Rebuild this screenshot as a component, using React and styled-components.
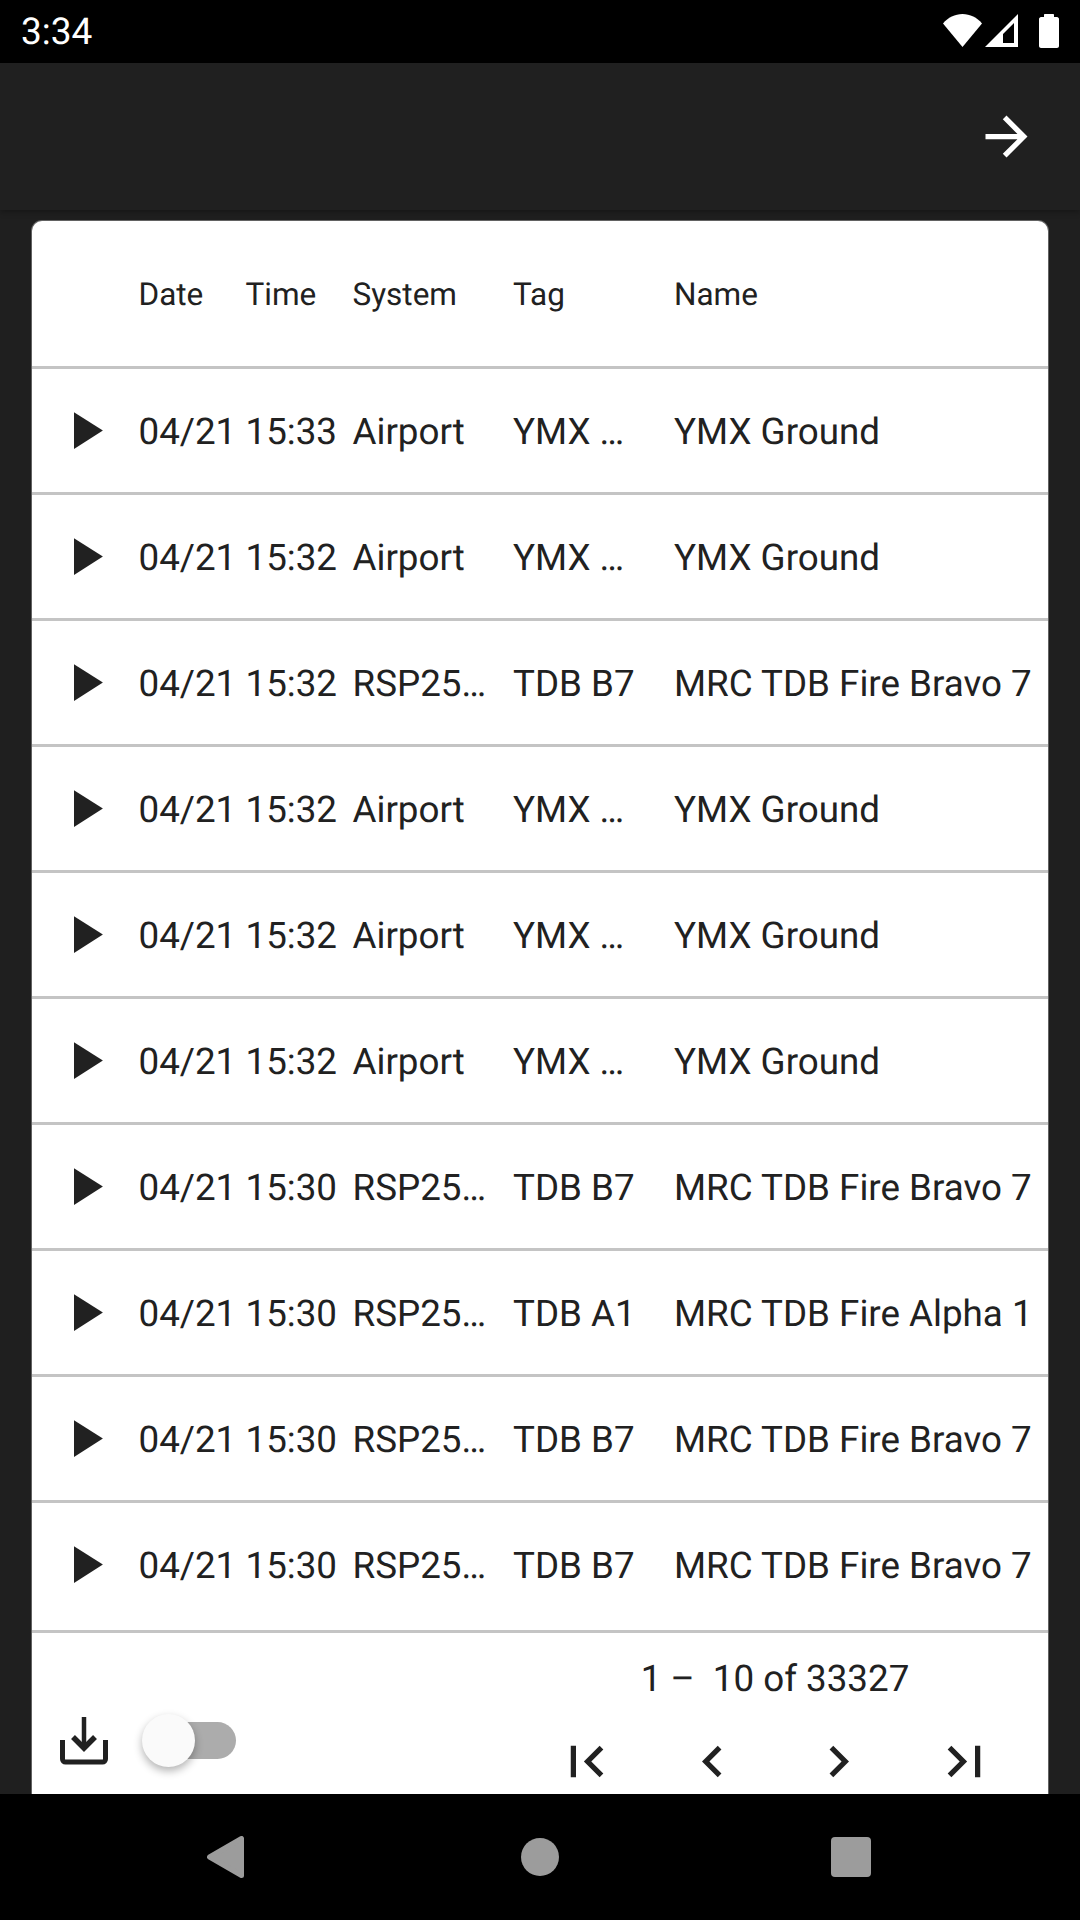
import React from 'react'
import styled, { createGlobalStyle } from 'styled-components'

const rows = [
  ['04/21', '15:33', 'Airport', 'YMX …', 'YMX Ground'],
  ['04/21', '15:32', 'Airport', 'YMX …', 'YMX Ground'],
  ['04/21', '15:32', 'RSP25…', 'TDB B7', 'MRC TDB Fire Bravo 7'],
  ['04/21', '15:32', 'Airport', 'YMX …', 'YMX Ground'],
  ['04/21', '15:32', 'Airport', 'YMX …', 'YMX Ground'],
  ['04/21', '15:32', 'Airport', 'YMX …', 'YMX Ground'],
  ['04/21', '15:30', 'RSP25…', 'TDB B7', 'MRC TDB Fire Bravo 7'],
  ['04/21', '15:30', 'RSP25…', 'TDB A1', 'MRC TDB Fire Alpha 1'],
  ['04/21', '15:30', 'RSP25…', 'TDB B7', 'MRC TDB Fire Bravo 7'],
  ['04/21', '15:30', 'RSP25…', 'TDB B7', 'MRC TDB Fire Bravo 7'],
]

const pageIcons = [
  'M18.41 16.59L13.82 12l4.59-4.59L17 6l-6 6 6 6zM6 6h2v12H6z',
  'M15.41 7.41L14 6l-6 6 6 6 1.41-1.41L10.83 12z',
  'M10 6L8.59 7.41 13.17 12l-4.58 4.59L10 18l6-6z',
  'M5.59 7.41L10.18 12l-4.59 4.59L7 18l6-6-6-6zM16 6h2v12h-2z',
]

export default function App() {
  return (
    <Screen>
      <GlobalStyle />
      <StatusBar>
        <Clock>3:34</Clock>
        <StatusIcons>
          <svg width="40" height="33" viewBox="0 0 40 33">
            <path d="M19.5 33L0 9.5C5 3.5 12 0 19.5 0S34 3.5 39 9.5z" fill="#fff" />
          </svg>
          <svg width="33" height="33" viewBox="0 0 33 33">
            <path fillRule="evenodd" d="M33 0v33H0zM29 9L18 20v9h11z" fill="#fff" />
          </svg>
          <BatteryIcon width="20" height="34" viewBox="0 0 20 34">
            <path d="M5 1c0-.6.4-1 1-1h8c.6 0 1 .4 1 1v2h3c1 0 2 1 2 2v27c0 1-1 2-2 2H2c-1 0-2-1-2-2V5c0-1 1-2 2-2h3z" fill="#fff" />
          </BatteryIcon>
        </StatusIcons>
      </StatusBar>
      <AppBar>
        <Icon size={63} color="#fff" d="M12 4l-1.41 1.41L16.17 11H4v2h12.17l-5.58 5.59L12 20l8-8z" />
      </AppBar>
      <Content>
        <Card>
          <HeaderRow>
            <span />
            <HeaderCell>Date</HeaderCell>
            <HeaderCell>Time</HeaderCell>
            <HeaderCell>System</HeaderCell>
            <HeaderCell>Tag</HeaderCell>
            <HeaderCell>Name</HeaderCell>
          </HeaderRow>
          {rows.map((row, i) => (
            <Row key={i} $last={i === rows.length - 1}>
              <PlayCell>
                <Icon size={63} color="#212121" d="M8 5v14l11-7z" />
              </PlayCell>
              {row.map((text, j) => (
                <Cell key={j}>{text}</Cell>
              ))}
            </Row>
          ))}
          <Footer>
            <FooterLeft>
              <svg width="72" height="72" viewBox="0 0 72 72" fill="none" stroke="#212121" style={{ display: 'block' }}>
                <path d="M14.5 36V55a3 3 0 0 0 3 3H54.500a3 3 0 0 0 3-3V36" strokeWidth="5" />
                <path d="M36 13V43" strokeWidth="4.5" />
                <path d="M25 33L36 44L47 33" strokeWidth="5.5" />
              </svg>
              <SwitchTrack>
                <SwitchThumb />
              </SwitchTrack>
            </FooterLeft>
            <Pager>
              <PageLabel>1 –  10 of 33327</PageLabel>
              <PageButtons>
                {pageIcons.map((d) => (
                  <PageButton key={d}>
                    <Icon size={63} color="#212121" d={d} />
                  </PageButton>
                ))}
              </PageButtons>
            </Pager>
          </Footer>
        </Card>
      </Content>
      <NavBar>
        <svg width="37" height="42" viewBox="0 0 37 42" style={{ display: 'block' }}>
          <polygon points="34.5,2.5 34.5,39.5 2.5,21" fill="#9c9c9c" stroke="#9c9c9c" strokeWidth="5" strokeLinejoin="round" />
        </svg>
        <NavCircle />
        <NavSquare />
      </NavBar>
    </Screen>
  )
}

function Icon({ size, color, d }) {
  return (
    <svg width={size} height={size} viewBox="0 0 24 24" style={{ display: 'block' }}>
      <path d={d} fill={color} />
    </svg>
  )
}

const GlobalStyle = createGlobalStyle`
  html, body {
    margin: 0;
    padding: 0;
    background: #000;
  }
  * {
    box-sizing: border-box;
  }
`

const Screen = styled.div`
  width: 1080px;
  height: 1920px;
  display: flex;
  flex-direction: column;
  overflow: hidden;
  background: #1f1f1f;
  font-family: Roboto, "Liberation Sans", sans-serif;
  text-rendering: geometricPrecision;
`

const StatusBar = styled.div`
  height: 63px;
  flex-shrink: 0;
  display: flex;
  align-items: center;
  justify-content: space-between;
  padding: 0 21px;
  background: #000;
`

const Clock = styled.div`
  color: #fff;
  font-size: 37px;
  line-height: 63px;
  padding-top: 2px;
`

const StatusIcons = styled.div`
  display: flex;
  align-items: flex-start;
  gap: 2px;
  height: 33px;
  margin-top: -3px;
`

const BatteryIcon = styled.svg`
  margin-left: 19px;
`

const AppBar = styled.div`
  height: 147px;
  flex-shrink: 0;
  display: flex;
  align-items: center;
  justify-content: flex-end;
  padding-right: 42px;
  background: #202020;
  box-shadow: 0 2px 6px rgba(0, 0, 0, 0.3);
`

const Content = styled.div`
  flex: 1;
  min-height: 0;
  padding: 11px 32px 0;
`

const Card = styled.div`
  height: 100%;
  background: #fff;
  border-radius: 10px 10px 0 0;
  overflow: hidden;
  display: flex;
  flex-direction: column;
  box-shadow: 0 0 0 1px rgba(255, 255, 255, 0.3);
`

const columns = '106.5px 107px 107px 160.5px 161px 1fr'

const HeaderRow = styled.div`
  height: 148px;
  flex-shrink: 0;
  display: grid;
  grid-template-columns: ${columns};
  align-items: center;
  border-bottom: 3px solid #c4c4c4;
`

const HeaderCell = styled.div`
  color: #212121;
  font-size: 31.5px;
  white-space: nowrap;
  padding-top: 2px;
`

const Row = styled.div`
  height: ${(p) => (p.$last ? 130 : 126)}px;
  padding-bottom: ${(p) => (p.$last ? 4 : 0)}px;
  flex-shrink: 0;
  display: grid;
  grid-template-columns: ${columns};
  align-items: center;
  border-bottom: 3px solid #c4c4c4;
`

const PlayCell = styled.div`
  padding-left: 21px;
`

const Cell = styled.div`
  color: #212121;
  font-size: 36.75px;
  white-space: nowrap;
  padding-top: 1px;
`

const Footer = styled.div`
  flex: 1;
  min-height: 0;
  display: flex;
  justify-content: space-between;
  padding-right: 21px;
`

const FooterLeft = styled.div`
  display: flex;
  align-items: center;
  align-self: flex-start;
  margin-top: 71px;
  padding-left: 16px;
  height: 72px;
`

const SwitchTrack = styled.div`
  position: relative;
  width: 86px;
  height: 37px;
  margin-left: 30px;
  border-radius: 19px;
  background: #acacac;
`

const SwitchThumb = styled.div`
  position: absolute;
  left: -8px;
  top: -8px;
  width: 53px;
  height: 53px;
  border-radius: 50%;
  background: #fafafa;
  box-shadow: 0 4px 8px rgba(0, 0, 0, 0.3);
`

const Pager = styled.div`
  display: flex;
  flex-direction: column;
  align-items: center;
  padding-top: 26px;
`

const PageLabel = styled.div`
  color: #212121;
  font-size: 36.75px;
  line-height: 39px;
  white-space: pre;
`

const PageButtons = styled.div`
  display: flex;
`

const PageButton = styled.div`
  width: 126px;
  height: 126px;
  display: flex;
  align-items: center;
  justify-content: center;
`

const NavBar = styled.div`
  height: 126px;
  flex-shrink: 0;
  display: grid;
  grid-template-columns: 314px 310px 1fr;
  align-items: center;
  padding-left: 207px;
  background: #000;
`

const NavCircle = styled.div`
  width: 38px;
  height: 38px;
  border-radius: 50%;
  background: #9c9c9c;
`

const NavSquare = styled.div`
  width: 40px;
  height: 40px;
  border-radius: 4px;
  background: #9c9c9c;
`
